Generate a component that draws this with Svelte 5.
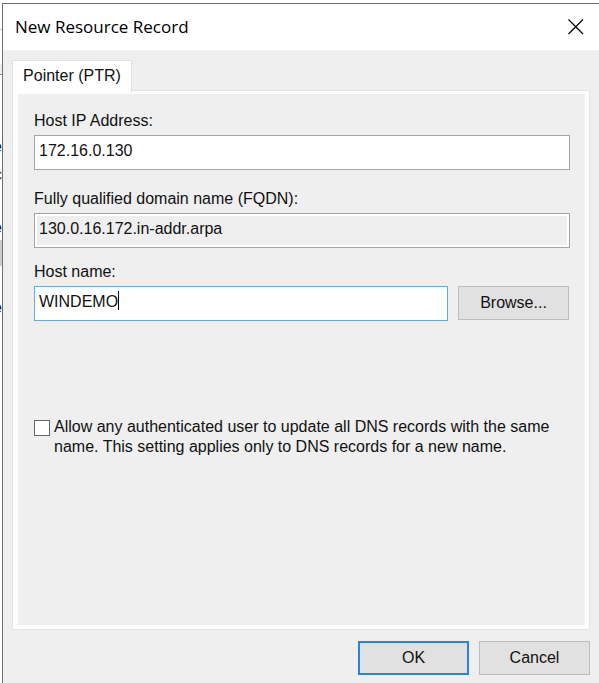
<script lang="ts">
  let ip = $state('172.16.0.130');
  let fqdn = $state('130.0.16.172.in-addr.arpa');
  let host = $state('WINDEMO');
  let allowUpdate = $state(false);
</script>

<div class="desktop">
  <div class="behind" aria-hidden="true">
    <span class="edge-line"></span>
    <span class="edge-bar"></span>
    <span class="letter first">e</span>
    <span class="letter link">c</span>
    <span class="letter">e</span>
    <span class="selected"></span>
    <span class="letter last">e</span>
  </div>

  <div class="dialog" role="dialog" aria-labelledby="dialog-title">
    <header class="titlebar">
      <h1 id="dialog-title">New Resource Record</h1>
      <button class="close" type="button" aria-label="Close">
        <svg width="16" height="16" viewBox="0 0 16 16">
          <path d="M.5 .5 15 15M15 .5 .5 15" fill="none" stroke="#000" stroke-width="1.2" />
        </svg>
      </button>
    </header>

    <form class="content" onsubmit={(e) => e.preventDefault()}>
      <div role="tablist">
        <button class="tab" type="button" role="tab" aria-selected="true">Pointer (PTR)</button>
      </div>

      <div class="panel" role="tabpanel">
        <div class="panel-body">
          <div class="field">
            <label for="ip">Host IP Address:</label>
            <input id="ip" type="text" bind:value={ip} />
          </div>

          <div class="field">
            <label for="fqdn">Fully qualified domain name (FQDN):</label>
            <input id="fqdn" class="readonly" type="text" readonly value={fqdn} />
          </div>

          <div class="field host">
            <label for="host">Host name:</label>
            <div class="host-row">
              <div class="host-box">
                <input id="host" class="active" type="text" bind:value={host} />
                {#if host === 'WINDEMO'}<span class="caret"></span>{/if}
              </div>
              <button class="btn" type="button">Browse...</button>
            </div>
          </div>

          <div class="check">
            <input id="allow" type="checkbox" bind:checked={allowUpdate} />
            <label for="allow">Allow any authenticated user to update all DNS records with the same name. This setting applies only to DNS records for a new name.</label>
          </div>
        </div>
      </div>

      <footer class="actions">
        <button class="btn default" type="submit">OK</button>
        <button class="btn" type="button">Cancel</button>
      </footer>
    </form>
  </div>
</div>

<style>
  :global(body) {
    background: #fff;
  }

  .desktop {
    display: flex;
    box-sizing: border-box;
    min-height: 100vh;
    padding-top: 3px;
    font: 16px/20px 'Liberation Sans', Arial, sans-serif;
    color: #111;
    overflow: hidden;
  }

  .behind {
    display: flex;
    flex-direction: column;
    width: 2px;
    flex: none;
    overflow: hidden;
  }

  .edge-line {
    height: 1px;
    margin-top: 26px;
    background: #c8c8c8;
  }

  .edge-bar {
    height: 10px;
    margin-top: 34px;
    background: #eee;
    border-bottom: 1px solid #888;
  }

  .letter {
    display: flex;
    justify-content: flex-end;
    height: 20px;
    margin-top: 33px;
  }

  .letter.first {
    margin-top: 62px;
  }

  .letter.link {
    margin-top: 8px;
    color: #84301c;
  }

  .selected {
    height: 26px;
    margin-top: 2px;
    background: #ccc;
  }

  .letter.last {
    margin-top: 32px;
  }

  .dialog {
    display: flex;
    flex-direction: column;
    flex: 1;
    min-width: 0;
    background: #efefef;
    border-top: 1px solid #707070;
    border-left: 1px solid #707070;
  }

  .titlebar {
    display: flex;
    align-items: center;
    justify-content: space-between;
    height: 46px;
    padding: 0 11px 0 12px;
    background: #fff;
  }

  h1 {
    margin: 0;
    font: 400 17px/24px 'Open Sans', 'Noto Sans', sans-serif;
    color: #000;
  }

  button {
    box-sizing: border-box;
    font: inherit;
    color: inherit;
  }

  .close {
    display: flex;
    padding: 4px;
    background: none;
    border: 0;
  }

  .content {
    display: flex;
    flex-direction: column;
    flex: 1;
    padding: 10px 9px 8px;
  }

  .tab {
    display: block;
    position: relative;
    height: 33px;
    width: 120px;
    padding: 0 0 2px;
    background: #fff;
    border: 1px solid #e2e2e2;
    border-bottom: 0;
  }

  .panel {
    display: flex;
    flex: 1;
    margin-top: -3px;
    background: #fff;
    border: 1px solid #e4e4e4;
    padding: 3px 4px 4px 5px;
  }

  .panel-body {
    display: flex;
    flex-direction: column;
    flex: 1;
    min-width: 0;
    padding: 17px 15px 16px 16px;
    background: #efefef;
  }

  .field {
    display: flex;
    flex-direction: column;
    gap: 4px;
  }

  .field + .field {
    margin-top: 19px;
  }

  .field + .field.host {
    margin-top: 14px;
  }

  input[type='text'] {
    box-sizing: border-box;
    width: 100%;
    height: 35px;
    padding: 0 4px 4px;
    font: inherit;
    color: inherit;
    background: #fff;
    border: 1px solid #a5a5a5;
    border-radius: 0;
    outline: 0;
  }

  input.readonly {
    background: #efefef;
    box-shadow: inset 0 0 0 2px #fff;
  }

  input.active {
    border-color: #62aae8;
  }

  .host-row {
    display: flex;
    gap: 10px;
    padding-right: 1px;
  }

  .host-box {
    position: relative;
    flex: 1;
  }

  .caret {
    position: absolute;
    top: 5px;
    left: 84px;
    width: 1px;
    height: 19px;
    background: #000;
  }

  .btn {
    width: 111px;
    height: 34px;
    padding: 0;
    background: #e1e1e1;
    border: 1px solid #bdbdbd;
  }

  .btn.default {
    border: 2px solid #2585dc;
  }

  .check {
    display: flex;
    align-items: flex-start;
    gap: 4px;
    margin-top: 96px;
  }

  .check input {
    appearance: none;
    box-sizing: border-box;
    flex: none;
    width: 16px;
    height: 16px;
    margin: 3px 0 0;
    background: #fff;
    border: 1px solid #666;
  }

  .check input:checked {
    box-shadow: inset 0 0 0 3px #fff;
    background: #333;
  }

  .actions {
    display: flex;
    justify-content: flex-end;
    gap: 10px;
    margin-top: 11px;
  }
</style>
